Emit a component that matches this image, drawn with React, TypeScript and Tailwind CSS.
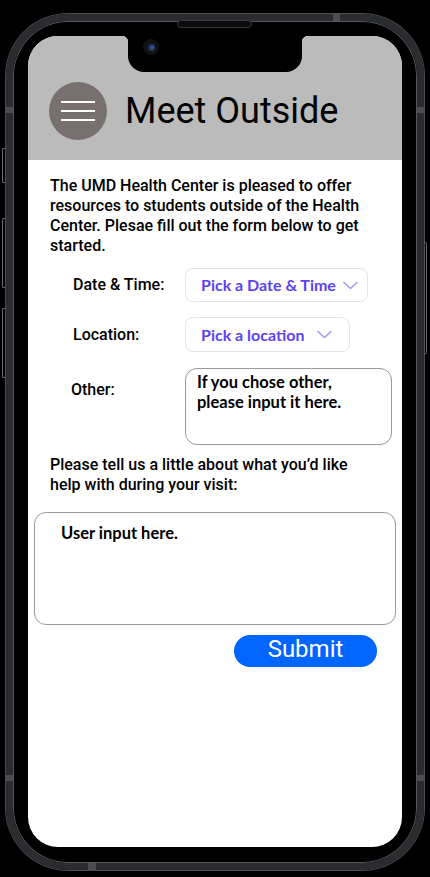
import React from "react";

function Chevron() {
  return (
    <svg width="15" height="9" viewBox="0 0 15 9" fill="none" className="shrink-0">
      <polyline points="1,1.5 7.5,7.5 14,1.5" stroke="#a597f3" strokeWidth="1.6" strokeLinecap="round" strokeLinejoin="round" />
    </svg>
  );
}

export default function App() {
  const roboto = { fontFamily: "Roboto, 'Liberation Sans', sans-serif" };
  const alt = { fontFamily: "Lato, 'Noto Sans', sans-serif" };
  return (
    <div className="relative w-[430px] h-[877px] bg-black overflow-hidden" style={roboto}>
      {/* side buttons */}
      <div className="absolute left-[2px] top-[148px] w-[3px] h-[35px] border border-[#6a6b6f] rounded-l-[2px] border-r-0" />
      <div className="absolute left-[2px] top-[218px] w-[3px] h-[70px] border border-[#6a6b6f] rounded-l-[2px] border-r-0" />
      <div className="absolute left-[2px] top-[308px] w-[3px] h-[70px] border border-[#6a6b6f] rounded-l-[2px] border-r-0" />
      <div className="absolute left-[424px] top-[242px] w-[3px] h-[112px] border border-[#6a6b6f] rounded-r-[2px] border-l-0" />

      {/* frame */}
      <div className="mt-[14px] ml-[6px] w-[418px] h-[856px] rounded-[62px] border-[7px] border-[#2b2c30] shadow-[inset_0_0_0_1px_#55575b,0_0_0_1px_#4b4c50] pt-[15px] pb-[16px] px-[15px]">
        <div className="relative h-full rounded-[30px] overflow-hidden bg-white flex flex-col">
          {/* header */}
          <div className="h-[124px] shrink-0 bg-[#bbbbbb] flex items-end pb-[20px] pl-[21px] gap-[18px]">
            <div className="w-[58px] h-[58px] rounded-full bg-[#786f6f] flex flex-col items-center justify-center gap-[7px]">
              <div className="w-[34px] h-[2px] bg-white" />
              <div className="w-[34px] h-[2px] bg-white" />
              <div className="w-[34px] h-[2px] bg-white" />
            </div>
            <div className="h-[58px] flex items-center text-[36px] leading-none text-black">Meet Outside</div>
          </div>

          {/* body */}
          <div className="pt-[16px] pl-[22px] pr-[22px] text-[16px] leading-[20px] font-medium text-black">
            The UMD Health Center is pleased to offer resources to students outside of the Health Center. Plesae fill out the form below to get started.
          </div>

          <div className="mt-[12px] flex items-center">
            <div className="w-[157px] pl-[45px] text-[16px] font-medium text-black shrink-0">Date &amp; Time:</div>
            <div className="h-[34px] w-[183px] rounded-[8px] border border-[#e3e3e8] flex items-center pl-[15px] gap-[7px]">
              <span className="text-[16px] font-bold text-[#5b43f2] whitespace-nowrap" style={alt}>Pick a Date &amp; Time</span>
              <Chevron />
            </div>
          </div>

          <div className="mt-[15px] flex items-center">
            <div className="w-[157px] pl-[45px] text-[16px] font-medium text-black shrink-0">Location:</div>
            <div className="h-[35px] w-[165px] rounded-[8px] border border-[#e3e3e8] flex items-center pl-[15px] gap-[12px]">
              <span className="text-[16px] font-bold text-[#5b43f2] whitespace-nowrap" style={alt}>Pick a location</span>
              <Chevron />
            </div>
          </div>

          <div className="mt-[16px] flex items-start">
            <div className="w-[157px] pl-[43px] pt-[10px] text-[16px] font-medium text-black shrink-0">Other:</div>
            <div className="h-[77px] w-[207px] rounded-[12px] border border-[#9a9a9a] pl-[11px] pt-[3px] text-[16.5px] leading-[20px] font-bold text-black" style={alt}>
              If you chose other,<br />please input it here.
            </div>
          </div>

          <div className="mt-[10px] pl-[22px] pr-[22px] text-[16px] leading-[20px] font-medium text-black">
            Please tell us a little about what you’d like help with during your visit:
          </div>

          <div className="mt-[17px] ml-[6px] w-[362px] h-[113px] rounded-[12px] border border-[#9a9a9a] pl-[26px] pt-[10px] text-[16.5px] leading-[20px] font-bold text-black" style={alt}>
            User input here.
          </div>

          <div className="mt-[10px] ml-[206px] w-[143px] h-[32px] rounded-full bg-[#0066ff] flex items-center justify-center text-white text-[24px] leading-none pb-[4px]">
            Submit
          </div>

          {/* notch */}
          <div className="absolute top-0 left-[100px] w-[174px] h-[36px] bg-black rounded-b-[16px]">
            <div className="absolute -left-[6px] top-0 w-[6px] h-[6px] bg-[radial-gradient(circle_at_0_100%,transparent_6px,black_6.5px)]" />
            <div className="absolute -right-[6px] top-0 w-[6px] h-[6px] bg-[radial-gradient(circle_at_100%_100%,transparent_6px,black_6.5px)]" />
            <div className="absolute left-[15px] top-[3px] w-[16px] h-[16px] rounded-full bg-[#101216] flex items-center justify-center">
              <div className="w-[7px] h-[7px] rounded-full bg-[radial-gradient(circle_at_60%_50%,#3a5fb0,#1a2a40_70%)]" />
            </div>
          </div>
        </div>
      </div>

      {/* speaker */}
      <div className="absolute left-[177px] top-[20px] w-[75px] h-[8px] rounded-full bg-[#0c0c0d] border border-[#38393c]" />

      {/* antenna bands */}
      <div className="absolute left-[6px] top-[107px] w-[7px] h-[6px] bg-[#4c4d51]" />
      <div className="absolute left-[417px] top-[107px] w-[7px] h-[6px] bg-[#4c4d51]" />
      <div className="absolute left-[333px] top-[14px] w-[7px] h-[7px] bg-[#4c4d51]" />
      <div className="absolute left-[6px] top-[775px] w-[7px] h-[6px] bg-[#4c4d51]" />
      <div className="absolute left-[417px] top-[775px] w-[7px] h-[6px] bg-[#4c4d51]" />
      <div className="absolute left-[88px] top-[863px] w-[8px] h-[7px] bg-[#4c4d51]" />
    </div>
  );
}
